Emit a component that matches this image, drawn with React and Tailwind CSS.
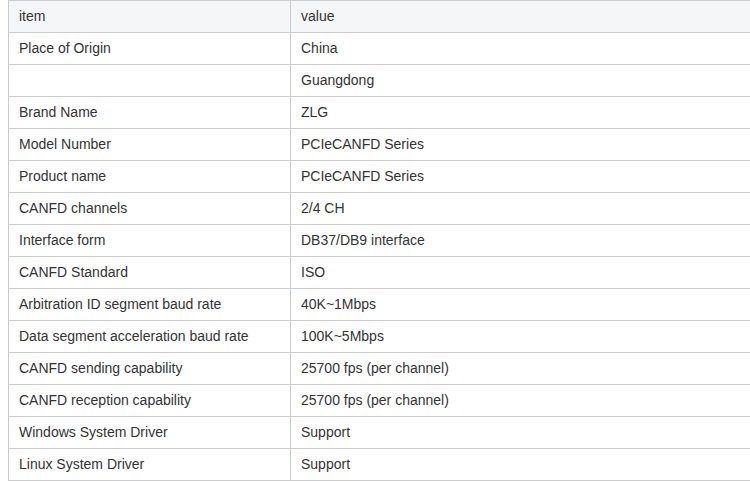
const rows = [
  ['Place of Origin', 'China'],
  ['', 'Guangdong'],
  ['Brand Name', 'ZLG'],
  ['Model Number', 'PCIeCANFD Series'],
  ['Product name', 'PCIeCANFD Series'],
  ['CANFD channels', '2/4 CH'],
  ['Interface form', 'DB37/DB9 interface'],
  ['CANFD Standard', 'ISO'],
  ['Arbitration ID segment baud rate', '40K~1Mbps'],
  ['Data segment acceleration baud rate', '100K~5Mbps'],
  ['CANFD sending capability', '25700 fps (per channel)'],
  ['CANFD reception capability', '25700 fps (per channel)'],
  ['Windows System Driver', 'Support'],
  ['Linux System Driver', 'Support'],
]

const App = () => {
  return (
    <div className="w-[750px] h-[481px] overflow-hidden bg-white" style={{fontFamily: '"Liberation Sans", Arial, sans-serif'}}>
      <table className="ml-2 w-[760px] border-collapse text-[14px] leading-none text-[#333] table-fixed">
        <colgroup>
          <col className="w-[282px]" />
          <col />
        </colgroup>
        <thead>
          <tr className="h-[32px] bg-[#f5f6f8]">
            <th className="border border-[#ccc] px-[10px] pb-[2px] text-left font-normal">item</th>
            <th className="border border-[#ccc] px-[10px] pb-[2px] text-left font-normal">value</th>
          </tr>
        </thead>
        <tbody>
          {rows.map(([k, v], i) => (
            <tr key={i} className="h-[32px]">
              <td className="border border-[#ccc] px-[10px] pb-[2px]">{k}</td>
              <td className="border border-[#ccc] px-[10px] pb-[2px]">{v}</td>
            </tr>
          ))}
        </tbody>
      </table>
    </div>
  )
}

export default App
